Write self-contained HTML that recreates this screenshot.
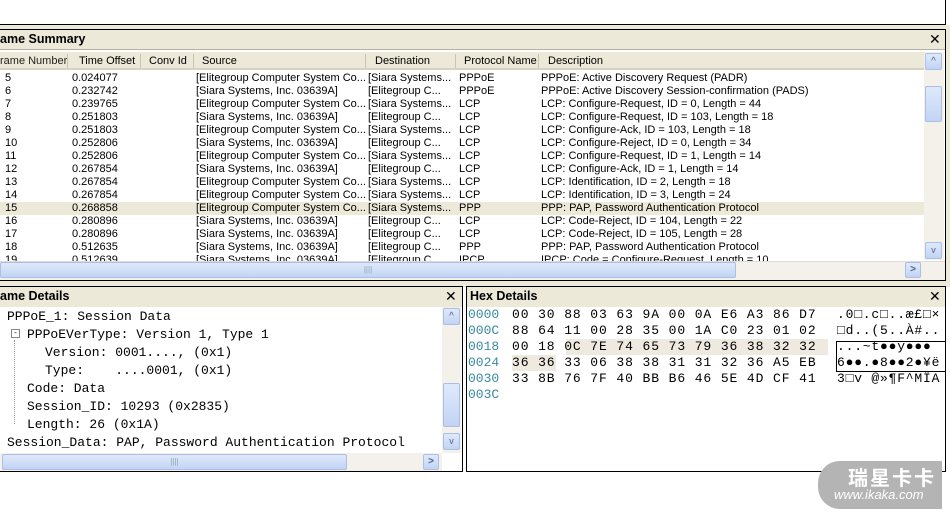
<!DOCTYPE html>
<html><head><meta charset="utf-8"><style>
*{margin:0;padding:0;box-sizing:border-box}
body{width:950px;height:512px;background:#fff;position:relative;overflow:hidden;font-family:Tahoma,"Liberation Sans",sans-serif;font-size:11px;color:#000}
.a{position:absolute;white-space:nowrap}
.ttl{font-weight:bold;font-size:12.5px}
.m{font-family:"Liberation Mono",monospace;font-size:13px;white-space:pre}
.sb{background:linear-gradient(#dfe9fb,#c2d4f4);border:1px solid #a9bfe6;border-radius:2px}
</style></head><body>
<div class="a" style="left:0;top:0;width:946px;height:25px;border-right:1px solid #000;border-bottom:1px solid #000;background:#fff"></div>
<div class="a" style="left:0;top:25px;width:950px;height:262px;background:#ece9d8"></div>
<div class="a" style="left:-2px;top:29px;width:948px;height:252px;border:1px solid #000;background:#fff"></div>
<div class="a" style="left:0;top:30px;width:945px;height:20px;background:#ece9d8;border-bottom:1px solid #b5b2a5"></div>
<div class="a ttl" style="left:0;top:32px">ame Summary</div>
<div class="a" style="left:929px;top:31px;font-size:14px">✕</div>
<div class="a" style="left:0;top:52px;width:924px;height:18px;background:#ece9d8;border-bottom:2px solid #d6d2c2"></div>
<div class="a" style="left:0;top:55px;color:#222">rame Number</div>
<div class="a" style="left:67px;top:54px;width:1px;height:14px;background:#c8c4b4"></div>
<div class="a" style="left:79px;top:55px">Time Offset</div>
<div class="a" style="left:140px;top:54px;width:1px;height:14px;background:#c8c4b4"></div>
<div class="a" style="left:149px;top:55px">Conv Id</div>
<div class="a" style="left:193px;top:54px;width:1px;height:14px;background:#c8c4b4"></div>
<div class="a" style="left:202px;top:55px">Source</div>
<div class="a" style="left:365px;top:54px;width:1px;height:14px;background:#c8c4b4"></div>
<div class="a" style="left:375px;top:55px">Destination</div>
<div class="a" style="left:455px;top:54px;width:1px;height:14px;background:#c8c4b4"></div>
<div class="a" style="left:464px;top:55px">Protocol Name</div>
<div class="a" style="left:538px;top:54px;width:1px;height:14px;background:#c8c4b4"></div>
<div class="a" style="left:548px;top:55px">Description</div>
<div class="a" style="left:0;top:202px;width:924px;height:13px;background:#ece9d8"></div>
<div class="a" style="left:0;top:72px;line-height:13px">
<div style="position:absolute;left:5px">5<br>6<br>7<br>8<br>9<br>10<br>11<br>12<br>13<br>14<br>15<br>16<br>17<br>18<br>19</div>
<div style="position:absolute;left:72px">0.024077<br>0.232742<br>0.239765<br>0.251803<br>0.251803<br>0.252806<br>0.252806<br>0.267854<br>0.267854<br>0.267854<br>0.268858<br>0.280896<br>0.280896<br>0.512635<br>0.512639</div>
<div style="position:absolute;left:196px">[Elitegroup Computer System Co...<br>[Siara Systems, Inc. 03639A]<br>[Elitegroup Computer System Co...<br>[Siara Systems, Inc. 03639A]<br>[Elitegroup Computer System Co...<br>[Siara Systems, Inc. 03639A]<br>[Elitegroup Computer System Co...<br>[Siara Systems, Inc. 03639A]<br>[Elitegroup Computer System Co...<br>[Elitegroup Computer System Co...<br>[Elitegroup Computer System Co...<br>[Siara Systems, Inc. 03639A]<br>[Siara Systems, Inc. 03639A]<br>[Siara Systems, Inc. 03639A]<br>[Siara Systems, Inc. 03639A]</div>
<div style="position:absolute;left:368px">[Siara Systems...<br>[Elitegroup C...<br>[Siara Systems...<br>[Elitegroup C...<br>[Siara Systems...<br>[Elitegroup C...<br>[Siara Systems...<br>[Elitegroup C...<br>[Siara Systems...<br>[Siara Systems...<br>[Siara Systems...<br>[Elitegroup C...<br>[Elitegroup C...<br>[Elitegroup C...<br>[Elitegroup C...</div>
<div style="position:absolute;left:459px">PPPoE<br>PPPoE<br>LCP<br>LCP<br>LCP<br>LCP<br>LCP<br>LCP<br>LCP<br>LCP<br>PPP<br>LCP<br>LCP<br>PPP<br>IPCP</div>
<div style="position:absolute;left:541px">PPPoE: Active Discovery Request (PADR)<br>PPPoE: Active Discovery Session-confirmation (PADS)<br>LCP: Configure-Request, ID = 0, Length = 44<br>LCP: Configure-Request, ID = 103, Length = 18<br>LCP: Configure-Ack, ID = 103, Length = 18<br>LCP: Configure-Reject, ID = 0, Length = 34<br>LCP: Configure-Request, ID = 1, Length = 14<br>LCP: Configure-Ack, ID = 1, Length = 14<br>LCP: Identification, ID = 2, Length = 18<br>LCP: Identification, ID = 3, Length = 24<br>PPP: PAP, Password Authentication Protocol<br>LCP: Code-Reject, ID = 104, Length = 22<br>LCP: Code-Reject, ID = 105, Length = 28<br>PPP: PAP, Password Authentication Protocol<br>IPCP: Code = Configure-Request, Length = 10</div>
</div>
<div class="a" style="left:0;top:261px;width:945px;height:19px;background:#f3f1ea;border-top:1px solid #ddd"></div>
<div class="a sb" style="left:0;top:262px;width:736px;height:16px;text-align:center;color:#8aa;font-size:8px;line-height:14px">||||</div>
<div class="a sb" style="left:905px;top:262px;width:16px;height:16px;text-align:center;line-height:14px;color:#4d6185;font-size:10px;font-weight:bold">&gt;</div>
<div class="a" style="left:924px;top:52px;width:20px;height:208px;background:#f3f1ea"></div>
<div class="a sb" style="left:925px;top:53px;width:17px;height:17px;text-align:center;color:#4d6185;font-size:10px;line-height:16px">^</div>
<div class="a sb" style="left:925px;top:86px;width:17px;height:36px"></div>
<div class="a sb" style="left:925px;top:242px;width:17px;height:17px;text-align:center;color:#4d6185;font-size:9px;line-height:15px">v</div>
<div class="a" style="left:-2px;top:286px;width:465px;height:186px;border:1px solid #000;background:#fff"></div>
<div class="a" style="left:0;top:287px;width:462px;height:20px;background:#ece9d8"></div>
<div class="a ttl" style="left:0;top:289px">ame Details</div>
<div class="a" style="left:445px;top:288px;font-size:14px">✕</div>
<div class="a m" style="left:7px;top:308px;line-height:18px">PPPoE_1: Session Data</div>
<div class="a" style="left:11px;top:329px;width:9px;height:9px;border:1px solid #888;background:#fff;font-size:8px;line-height:6px;text-align:center">-</div>
<div class="a m" style="left:27px;top:326px;line-height:18px">PPPoEVerType: Version 1, Type 1</div>
<div class="a m" style="left:45px;top:344px;line-height:18px">Version: 0001...., (0x1)
Type:    ....0001, (0x1)</div>
<div class="a m" style="left:27px;top:380px;line-height:18px">Code: Data
Session_ID: 10293 (0x2835)
Length: 26 (0x1A)</div>
<div class="a m" style="left:7px;top:434px;line-height:18px">Session_Data: PAP, Password Authentication Protocol</div>
<div class="a" style="left:14px;top:340px;border-left:1px dotted #999;height:84px"></div>
<div class="a" style="left:0;top:453px;width:442px;height:18px;background:#f3f1ea"></div>
<div class="a sb" style="left:2px;top:454px;width:345px;height:16px;text-align:center;color:#8aa;font-size:8px;line-height:14px">||||</div>
<div class="a sb" style="left:423px;top:454px;width:16px;height:16px;text-align:center;line-height:14px;color:#4d6185;font-size:10px;font-weight:bold">&gt;</div>
<div class="a" style="left:442px;top:307px;width:19px;height:146px;background:#f3f1ea"></div>
<div class="a sb" style="left:443px;top:308px;width:17px;height:17px;text-align:center;color:#4d6185;font-size:10px;line-height:16px">^</div>
<div class="a sb" style="left:443px;top:383px;width:17px;height:44px"></div>
<div class="a sb" style="left:443px;top:433px;width:17px;height:17px;text-align:center;color:#4d6185;font-size:9px;line-height:15px">v</div>
<div class="a" style="left:466px;top:286px;width:480px;height:186px;border:1px solid #000;background:#fff"></div>
<div class="a" style="left:467px;top:287px;width:478px;height:20px;background:#ece9d8"></div>
<div class="a ttl" style="left:470px;top:289px">Hex Details</div>
<div class="a" style="left:929px;top:288px;font-size:14px">✕</div>
<div class="a" style="left:566px;top:339px;width:262px;height:16px;background:#eeeae0"></div>
<div class="a" style="left:512px;top:355px;width:44px;height:16px;background:#eeeae0"></div>
<div class="a m" style="left:468px;top:307px;line-height:16px;color:#3a8aa0">0000
000C
0018
0024
0030
003C</div>
<div class="a m" style="left:512px;top:307px;line-height:16px;letter-spacing:0.9px">00 30 88 03 63 9A 00 0A E6 A3 86 D7
88 64 11 00 28 35 00 1A C0 23 01 02
00 18 0C 7E 74 65 73 79 36 38 32 32
36 36 33 06 38 38 31 31 32 36 A5 EB
33 8B 76 7F 40 BB B6 46 5E 4D CF 41</div>
<div class="a m" style="left:837px;top:307px;line-height:16px;letter-spacing:0.8px">.0□.c□..æ£□×
□d..(5..À#..
...~t●●y●●●
6●●.●8●●2●¥ë
3□v @»¶F^MÏA</div>
<div class="a" style="left:836px;top:341px;width:110px;height:31px;border:1px solid #000"></div>
<div class="a" style="left:818px;top:461px;width:124px;height:48px;background:#b4b4b4;border-radius:22px 0 0 22px"></div>
<div class="a" style="left:848px;top:462px;color:#fff;font-weight:bold;font-size:20px;font-family:'Liberation Sans','Noto Sans CJK SC',sans-serif;letter-spacing:2px">瑞星卡卡</div>
<div class="a" style="left:834px;top:487px;color:#fff;font-style:italic;font-size:13px;font-family:'Liberation Sans',sans-serif">www.ikaka.com</div>
</body></html>
